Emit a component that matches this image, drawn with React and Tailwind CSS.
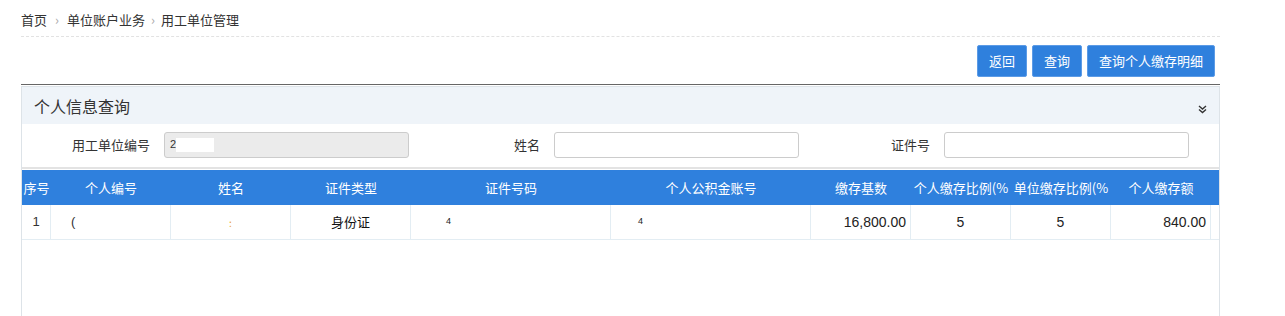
const cols = [
  { title: "序号", w: "w-[29px]" },
  { title: "个人编号", w: "w-[120px]" },
  { title: "姓名", w: "w-[120px]" },
  { title: "证件类型", w: "w-[120px]" },
  { title: "证件号码", w: "w-[200px]" },
  { title: "个人公积金账号", w: "w-[200px]" },
  { title: "缴存基数", w: "w-[100px]" },
  { title: "个人缴存比例(%", w: "w-[100px]" },
  { title: "单位缴存比例(%", w: "w-[100px]" },
  { title: "个人缴存额", w: "w-[100px]" },
];

const font = "font-['Microsoft_YaHei','Noto_Sans_CJK_SC',sans-serif]";

function Field({ label, disabled, value }) {
  return (
    <div className="flex items-center w-[390px]">
      <span className="w-[128px] text-right text-[13px] text-[#333]">{label}</span>
      <div
        className={`ml-[14px] w-[245px] h-[26px] border border-[#ccc] rounded-[3px] flex items-center px-[5px] ${
          disabled ? "bg-[#ebebeb]" : "bg-white"
        }`}
      >
        {value && (
          <>
            <span className="text-[11px] leading-none font-['Liberation_Sans',sans-serif] text-[#333]">2</span>
            <span className="w-[38px] h-[14px] bg-white" />
          </>
        )}
      </div>
    </div>
  );
}

export default function App() {
  return (
    <div className={`bg-white h-[316px] overflow-hidden ${font}`}>
      <div className="ml-[21px] w-[1199px]">
        {/* breadcrumb */}
        <div className="h-[37px] flex items-center pt-[4px] text-[13px] text-[#333] border-b border-dashed border-[#e2e2e2]">
          <span>首页</span>
          <span className="mx-[8px] text-[#aaa]">›</span>
          <span>单位账户业务</span>
          <span className="mx-[6px] text-[#aaa]">›</span>
          <span>用工单位管理</span>
        </div>

        {/* buttons */}
        <div className="flex justify-end gap-[5px] pr-[5px] pt-[8px] pb-[7px] border-b border-[#666]">
          {["返回", "查询", "查询个人缴存明细"].map((t) => (
            <button
              key={t}
              className="h-[32px] px-[11px] bg-[#2f80dd] border border-[#5c9be6] rounded-[2px] text-white text-[13px]"
            >
              {t}
            </button>
          ))}
        </div>

        {/* panel */}
        <div className="mt-[1px] border-x border-t border-[#dde3e8] h-[240px]">
          <div className="h-[37px] bg-[#eff4f9] flex items-center justify-between pl-[12px] pr-[12px]">
            <span className="text-[16px] text-[#333]">个人信息查询</span>
            <svg width="9" height="9" viewBox="0 0 9 9" className="mt-[8px]">
              <path d="M1 1 L4.5 4 L8 1 M1 4.5 L4.5 7.5 L8 4.5" fill="none" stroke="#333" strokeWidth="1.4" />
            </svg>
          </div>
          <div className="flex items-center h-[45px] pb-[2px] border-b-2 border-[#e3e3e3]">
            <Field label="用工单位编号" disabled value />
            <Field label="姓名" />
            <Field label="证件号" />
          </div>

          {/* table */}
          <div className="mt-[1px] bg-[#2f80dd]">
            <div className="flex h-[35px] items-center text-white text-[13px]">
              {cols.map((c) => (
                <div key={c.title} className={`${c.w} shrink-0 text-center whitespace-nowrap overflow-hidden`}>
                  {c.title}
                </div>
              ))}
            </div>
          </div>
          <div className="flex h-[35px] text-[13px] text-[#222] border-b border-[#e3edf3]">
            <div className="w-[29px] flex items-center justify-center border-r border-[#e3edf3] font-['Liberation_Sans',sans-serif] text-[#333]">1</div>
            <div className="w-[120px] flex items-center pl-[20px] border-r border-[#e3edf3] font-['Liberation_Sans',sans-serif] text-[#333]">(</div>
            <div className="w-[120px] flex items-center justify-center border-r border-[#e3edf3] text-[#e8a030] text-[10px]">:</div>
            <div className="w-[120px] flex items-center justify-center border-r border-[#e3edf3] text-[#111]">身份证</div>
            <div className="w-[200px] flex items-center pl-[35px] border-r border-[#e3edf3] font-['Liberation_Sans',sans-serif] text-[9px]">4</div>
            <div className="w-[200px] flex items-center pl-[27px] border-r border-[#e3edf3] font-['Liberation_Sans',sans-serif] text-[9px]">4</div>
            <div className="w-[100px] flex items-center justify-end pr-[4px] border-r border-[#e3edf3] font-['Liberation_Sans',sans-serif] text-[14px]">16,800.00</div>
            <div className="w-[100px] flex items-center justify-center border-r border-[#e3edf3] font-['Liberation_Sans',sans-serif] text-[14px]">5</div>
            <div className="w-[100px] flex items-center justify-center border-r border-[#e3edf3] font-['Liberation_Sans',sans-serif] text-[14px]">5</div>
            <div className="w-[100px] flex items-center justify-end pr-[4px] border-r border-[#e3edf3] font-['Liberation_Sans',sans-serif] text-[14px]">840.00</div>
          </div>
        </div>
      </div>
    </div>
  );
}
